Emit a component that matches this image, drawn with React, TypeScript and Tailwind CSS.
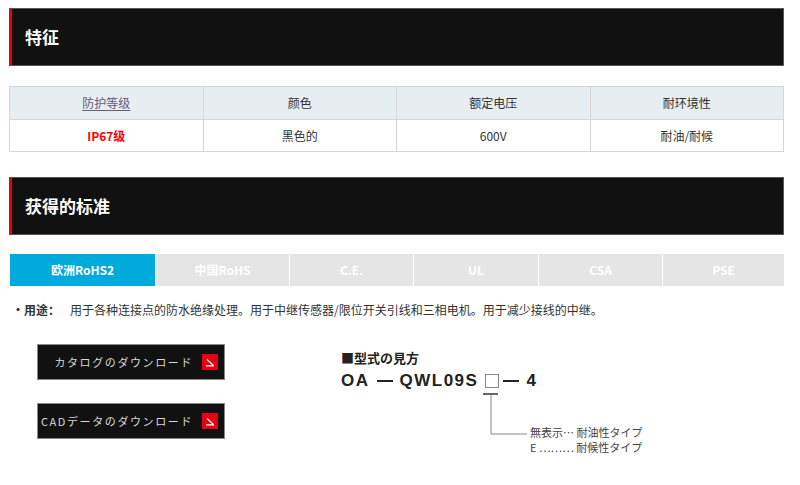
import React from "react";

const cjk = "font-['Noto_Sans_CJK_SC','Noto_Sans',sans-serif]";
const jp = "font-['Noto_Sans_CJK_JP','Noto_Sans',sans-serif]";

function SectionHeader({ title }: { title: string }) {
  return (
    <div className="flex h-[58px] items-center border border-[#555] border-l-0 bg-[#111]">
      <div className="h-full w-[3px] bg-[#e60012]" />
      <h2 className={`${cjk} pl-[13px] text-[17px] font-bold text-white`}>{title}</h2>
    </div>
  );
}

const specs = [
  { head: "防护等级", value: "IP67级", link: true },
  { head: "颜色", value: "黑色的" },
  { head: "额定电压", value: "600V" },
  { head: "耐环境性", value: "耐油/耐候" },
];

const tabs = [
  { label: "欧洲RoHS2", w: "w-[145px]", active: true },
  { label: "中国RoHS", w: "w-[133px]" },
  { label: "C.E.", w: "w-[123px]" },
  { label: "UL", w: "w-[124px]" },
  { label: "CSA", w: "w-[123px]" },
  { label: "PSE", w: "flex-1" },
];

function DownloadButton({ label }: { label: string }) {
  return (
    <a className="flex h-[36px] w-[188px] items-center justify-end gap-[9px] border border-[#888] bg-[#111] pr-[6px]">
      <span className={`${jp} text-[11px] tracking-[1.6px] text-[#d8d8d8]`}>{label}</span>
      <span className="flex h-[16px] w-[16px] items-center justify-center bg-[#e60012]">
        <svg width="10" height="9" viewBox="0 0 10 9" fill="none" stroke="white" strokeWidth="1.2">
          <path d="M2 1.5 L8.5 7.5 M1 7.8 H9" />
        </svg>
      </span>
    </a>
  );
}

export default function App() {
  return (
    <main className={`${cjk} w-[800px] bg-white px-[9px] pt-[8px] text-[#333]`}>
      <div className="w-[775px]">
        <SectionHeader title="特征" />

        <table className="mt-[20px] w-full table-fixed border-collapse text-[12px]">
          <thead>
            <tr className="h-[33px] bg-[#e6eef1]">
              {specs.map((s) => (
                <th key={s.head} className="border border-[#d6d6d6] font-normal text-[#333]">
                  {s.link ? <span className="text-[#6b5a7a] underline underline-offset-2">{s.head}</span> : s.head}
                </th>
              ))}
            </tr>
          </thead>
          <tbody>
            <tr className="h-[32px]">
              {specs.map((s) => (
                <td
                  key={s.head}
                  className={`border border-[#d6d6d6] text-center ${s.link ? "font-bold text-[#f00]" : "text-[#333]"}`}
                >
                  {s.value}
                </td>
              ))}
            </tr>
          </tbody>
        </table>

        <div className="mt-[25px]">
          <SectionHeader title="获得的标准" />
        </div>

        <div className="mt-[19px] flex h-[32px] gap-px pl-px">
          {tabs.map((t) => (
            <div
              key={t.label}
              className={`${t.w} flex items-center justify-center text-[12px] font-bold text-white ${
                t.active ? "bg-[#00abdc]" : "bg-[#e5e5e5]"
              }`}
            >
              {t.label}
            </div>
          ))}
        </div>

        <p className="mt-[15px] flex text-[12px] text-[#333]">
          <span className="w-[61px] pl-[3px] font-bold">・用途：</span>
          <span>用于各种连接点的防水绝缘处理。用于中继传感器/限位开关引线和三相电机。用于减少接线的中继。</span>
        </p>

        <div className="mt-[25px] flex">
          <div className="ml-[28px] flex flex-col gap-[23px]">
            <DownloadButton label="カタログのダウンロード" />
            <DownloadButton label="CADデータのダウンロード" />
          </div>

          <div className="ml-[116px] pt-[5px] text-[#222]">
            <div className={`${jp} text-[13px] font-bold leading-[18px]`}>■型式の見方</div>
            <div className="mt-[3px] flex items-center font-['Liberation_Sans',Arial,sans-serif] text-[17px] font-bold leading-[22px] tracking-[1.5px]">
              <span>OA</span>
              <span className="mx-[7px] inline-block h-[2px] w-[16px] bg-[#222]" />
              <span>QWL09S</span>
              <span className="ml-[7px] inline-block h-[14px] w-[14px] border border-[#888]" />
              <span className="ml-[4px] mr-[7px] inline-block h-[2px] w-[16px] bg-[#222]" />
              <span>4</span>
            </div>
            <div className="flex">
              <svg width="190" height="62" viewBox="0 0 190 62" className="ml-[140px] shrink-0 overflow-visible" fill="none">
                <path d="M2 2 H17" stroke="#666" strokeWidth="2" />
                <path d="M10 3 V42 H46" stroke="#888" strokeWidth="1" />
              </svg>
            </div>
            <div className={`${jp} -mt-[29px] ml-[189px] text-[11px] leading-[15px] text-[#444]`}>
              <div>無表示… 耐油性タイプ</div>
              <div>E ……… 耐候性タイプ</div>
            </div>
          </div>
        </div>
      </div>
    </main>
  );
}
